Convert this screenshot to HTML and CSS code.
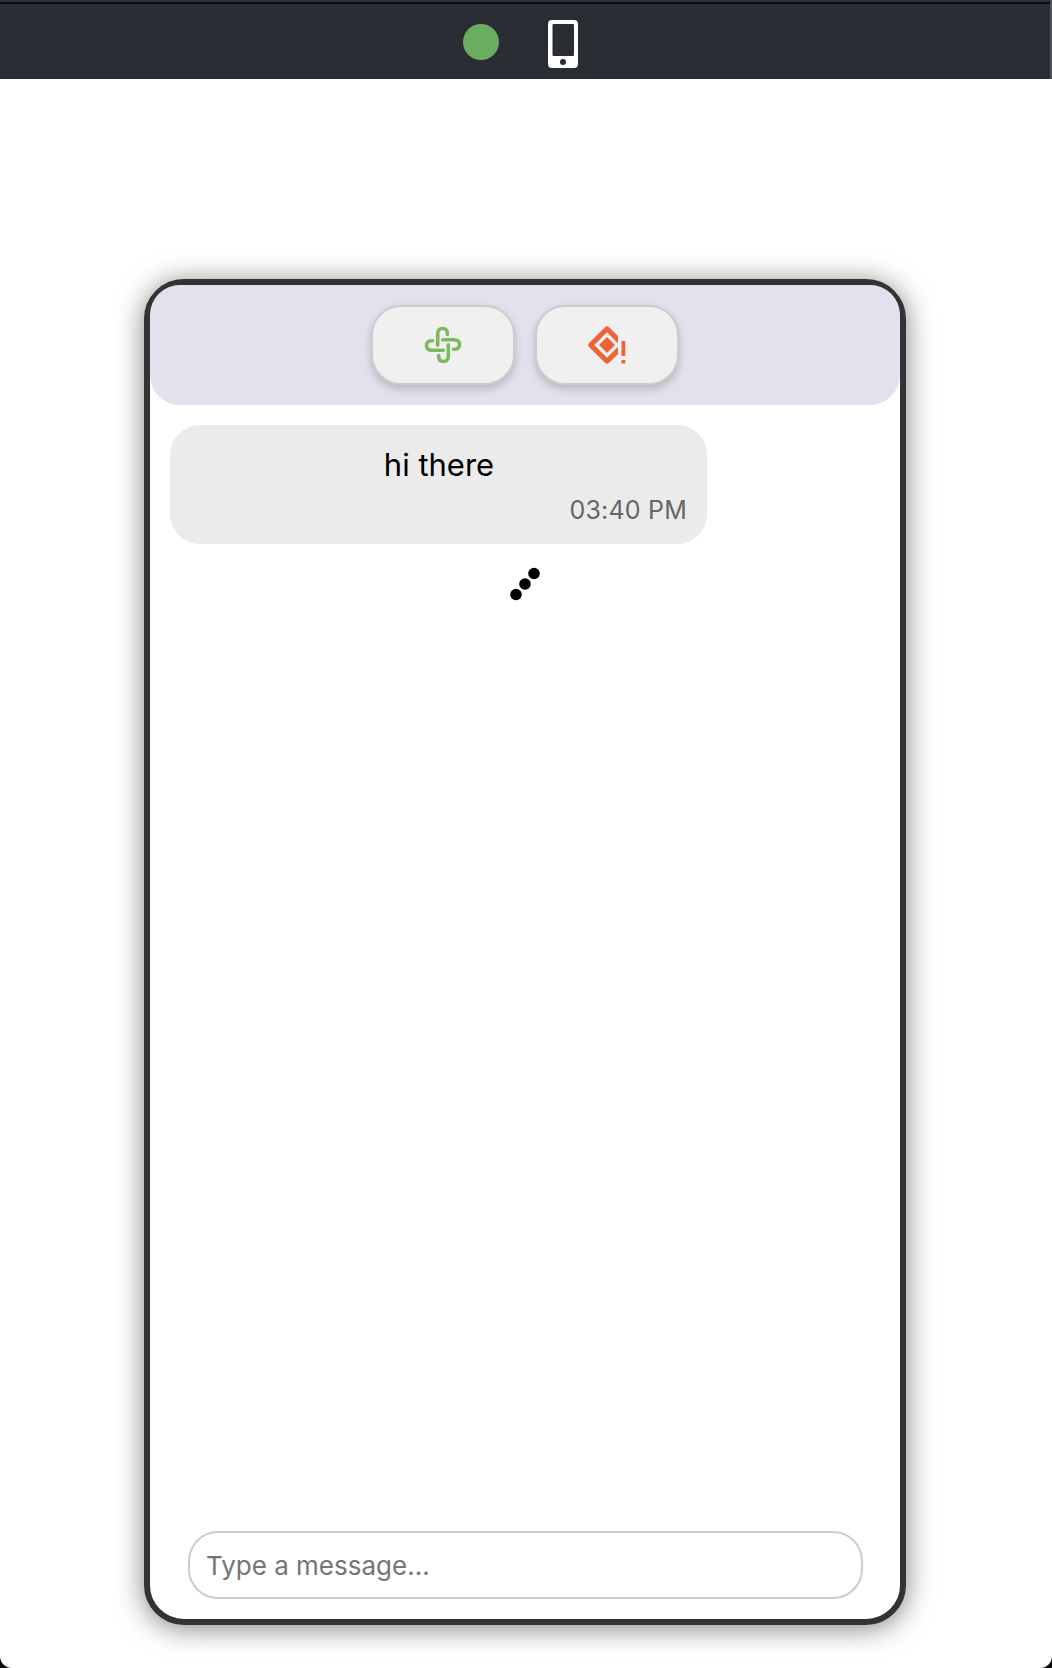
FILE: index.html
```html
<!DOCTYPE html>
<html lang="en">
<head>
<meta charset="utf-8">
<title>Chat</title>
<link rel="stylesheet" href="styles.css">
</head>
<body>
<header class="topbar">
  <span class="status"></span>
  <svg class="device" viewBox="0 0 30 48"><path fill="#fff" fill-rule="evenodd" d="M4 0H26Q30 0 30 4V44Q30 48 26 48H4Q0 48 0 44V4Q0 0 4 0ZM5.500 4Q4.500 4 4.500 5V35Q4.500 36 5.500 36H25Q26 36 26 35V5Q26 4 25 4ZM15 39A3 3 0 1 0 15 45A3 3 0 1 0 15 39Z"/></svg>
</header>
<main class="stage">
  <section class="phone">
    <div class="toolbar">
      <button class="tool" aria-label="Connect">
        <svg class="tool-icon" viewBox="0 0 38 38" fill="none" stroke="#7fb95f" stroke-width="3.600" stroke-linecap="round"><path d="M13.700 19.300V8Q13.700 2.500 18.500 2.500Q23.300 2.500 23.300 7.500V8.500"/><path d="M13.700 19.300V8Q13.700 2.500 18.500 2.500Q23.300 2.500 23.300 7.500V8.500" transform="rotate(90 19 19)"/><path d="M13.700 19.300V8Q13.700 2.500 18.500 2.500Q23.300 2.500 23.300 7.500V8.500" transform="rotate(180 19 19)"/><path d="M13.700 19.300V8Q13.700 2.500 18.500 2.500Q23.300 2.500 23.300 7.500V8.500" transform="rotate(270 19 19)"/></svg>
      </button>
      <button class="tool" aria-label="Report a problem">
        <svg class="tool-icon" viewBox="0 0 38 38" fill="#ed6335"><path d="M17 1.200Q19 -.7 21 1.200L30 10V17.300L19 6.300L6.300 19L19 31.700L30 20.700V28L21 36.800Q19 38.700 17 36.800L1.300 21.300Q-.7 19 1.300 16.700Z"/><path d="M19 11L27 19L19 27L11 19ZM33.500 15H37.300V30H33.500ZM33.500 34H37.300V37.500H33.500Z"/></svg>
      </button>
    </div>
    <div class="messages">
      <article class="bubble"><p class="text">hi there</p><time class="time">03:40 PM</time></article>
      <svg class="typing" viewBox="0 0 32 34"><circle cx="7" cy="27.500" r="5.800"/><circle cx="16" cy="17" r="5.800"/><circle cx="25" cy="6.500" r="5.800"/></svg>
    </div>
    <div class="composer"><input class="field" type="text" placeholder="Type a message..."></div>
  </section>
</main>
</body>
</html>
```
FILE: styles.css
```css
* { box-sizing: border-box; }
body { margin: 0; height: 1668px; overflow: hidden; background: #0c0c0e; font-family: Inter, "Liberation Sans", sans-serif; display: flex; flex-direction: column; }
.topbar { height: 79px; flex: none; background: linear-gradient(#302c38 2px, #0c0c0e 2px, #0c0c0e 4px, #2b2d35 4px); border-right: 2px solid #505259; display: flex; gap: 49px; padding: 20px 0 0 463px; }
.status { width: 36px; height: 36px; margin-top: 4px; border-radius: 50%; background: #6aad5e; }
.device { width: 30px; height: 48px; }
.stage { flex: 1; background: #fff; border-radius: 0 0 12px 12px; display: flex; justify-content: center; align-items: flex-start; padding: 200px 2px 0 0; }
.phone { width: 762px; height: 1346px; border: 6px solid #333; border-radius: 40px; background: #fff; box-shadow: 0 3px 28px rgba(0,0,0,.5); display: flex; flex-direction: column; }
.toolbar { height: 120px; border-radius: 30px; background: #e2e2ee; display: flex; justify-content: center; gap: 20px; padding-top: 20px; }
.tool { width: 144px; height: 80px; padding: 0; border: 2px solid #ccc; border-radius: 30px; background: #f0f0f0; box-shadow: 0 4px 8px rgba(0,0,0,.2); display: flex; align-items: center; justify-content: center; }
.tool-icon { width: 38px; height: 38px; overflow: visible; }
.messages { flex: 1; padding: 20px; }
.bubble { width: 537px; height: 119px; border-radius: 30px; background: #ebebeb; padding: 20px; display: flex; flex-direction: column; }
.text { margin: 0; padding-left: 1px; text-align: center; font-size: 31px; line-height: 40px; color: #000; }
.time { margin-top: 11px; text-align: right; font-size: 25px; line-height: 28px; letter-spacing: .2px; color: #666; }
.typing { display: block; margin: 23px auto 0; width: 32px; height: 34px; }
.composer { padding: 0 37px 20px 38px; }
.field { display: block; width: 100%; height: 68px; border: 2px solid #ccc; border-radius: 30px; background: #fff; padding: 0 16px; font: 26px Inter, "Liberation Sans", sans-serif; }
.field::placeholder { color: #757575; opacity: 1; }
```
